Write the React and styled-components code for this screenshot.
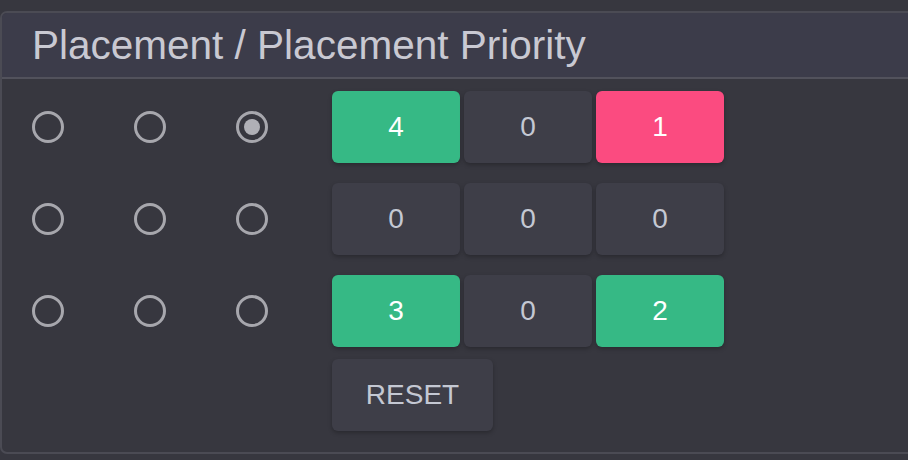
import React, { useState } from 'react';
import styled, { createGlobalStyle } from 'styled-components';

const GlobalStyle = createGlobalStyle`
  html, body {
    margin: 0;
    padding: 0;
    background: #37373f;
    overflow: hidden;
  }
  body {
    font-family: "Liberation Sans", Arial, sans-serif;
  }
`;

const Page = styled.div`
  padding-top: 11px;
  width: 908px;
  height: 460px;
  box-sizing: border-box;
`;

const Card = styled.section`
  width: 930px;
  border: 2px solid #4b4b54;
  border-radius: 7px;
  background: #37373f;
  box-sizing: border-box;
`;

const Header = styled.div`
  height: 64px;
  display: flex;
  align-items: center;
  padding-left: 30px;
  background: #3c3c4a;
  border-bottom: 2px solid #52525c;
  border-radius: 5px 5px 0 0;
`;

const Title = styled.h2`
  margin: 0;
  font-size: 40.5px;
  font-weight: 400;
  color: #c9c9d2;
`;

const Body = styled.div`
  display: flex;
  align-items: flex-start;
  padding: 12px 0 21px 30px;
`;

const RadioGrid = styled.div`
  display: grid;
  grid-template-columns: repeat(3, 32px);
  grid-auto-rows: 72px;
  column-gap: 70px;
  row-gap: 20px;
  align-items: center;
  margin-right: 64px;
`;

const Radio = styled.button`
  width: 32px;
  height: 32px;
  padding: 0;
  border-radius: 50%;
  border: 3px solid #a7a7ad;
  background: transparent;
  display: flex;
  align-items: center;
  justify-content: center;
  cursor: pointer;
  box-sizing: border-box;

  &::after {
    content: '';
    width: 16px;
    height: 16px;
    border-radius: 50%;
    background: ${p => (p.$checked ? '#b0b0b6' : 'transparent')};
  }
`;

const Controls = styled.div`
  display: flex;
  flex-direction: column;
  gap: 12px;
`;

const CellGrid = styled.div`
  display: grid;
  grid-template-columns: repeat(3, 128px);
  grid-auto-rows: 72px;
  column-gap: 4px;
  row-gap: 20px;
`;

const tones = {
  green: { bg: '#36b985', fg: '#ffffff' },
  pink: { bg: '#fb4b80', fg: '#ffffff' },
  plain: { bg: '#3e3e48', fg: '#c4c8d3' },
};

const Cell = styled.button`
  border: none;
  border-radius: 6px;
  background: ${p => tones[p.$tone].bg};
  color: ${p => tones[p.$tone].fg};
  font-family: "Liberation Sans", Arial, sans-serif;
  font-size: 28px;
  box-shadow: 0 2px 4px rgba(0, 0, 0, 0.25);
  cursor: pointer;
`;

const ResetButton = styled(Cell)`
  width: 161px;
  height: 72px;
  font-size: 28px;
`;

const initial = [4, 0, 1, 0, 0, 0, 3, 0, 2];
const toneFor = v => (v === 0 ? 'plain' : v === 1 ? 'pink' : 'green');

const App = () => {
  const [selected, setSelected] = useState(2);
  const [values, setValues] = useState(initial);

  return (
    <Page>
      <GlobalStyle />
      <Card>
        <Header>
          <Title>Placement / Placement Priority</Title>
        </Header>
        <Body>
          <RadioGrid>
            {values.map((_, i) => (
              <Radio key={i} $checked={selected === i} onClick={() => setSelected(i)} />
            ))}
          </RadioGrid>
          <Controls>
            <CellGrid>
              {values.map((v, i) => (
                <Cell key={i} $tone={toneFor(v)}>{v}</Cell>
              ))}
            </CellGrid>
            <ResetButton $tone="plain" onClick={() => setValues(initial.map(() => 0))}>
              RESET
            </ResetButton>
          </Controls>
        </Body>
      </Card>
    </Page>
  );
};

export default App;
